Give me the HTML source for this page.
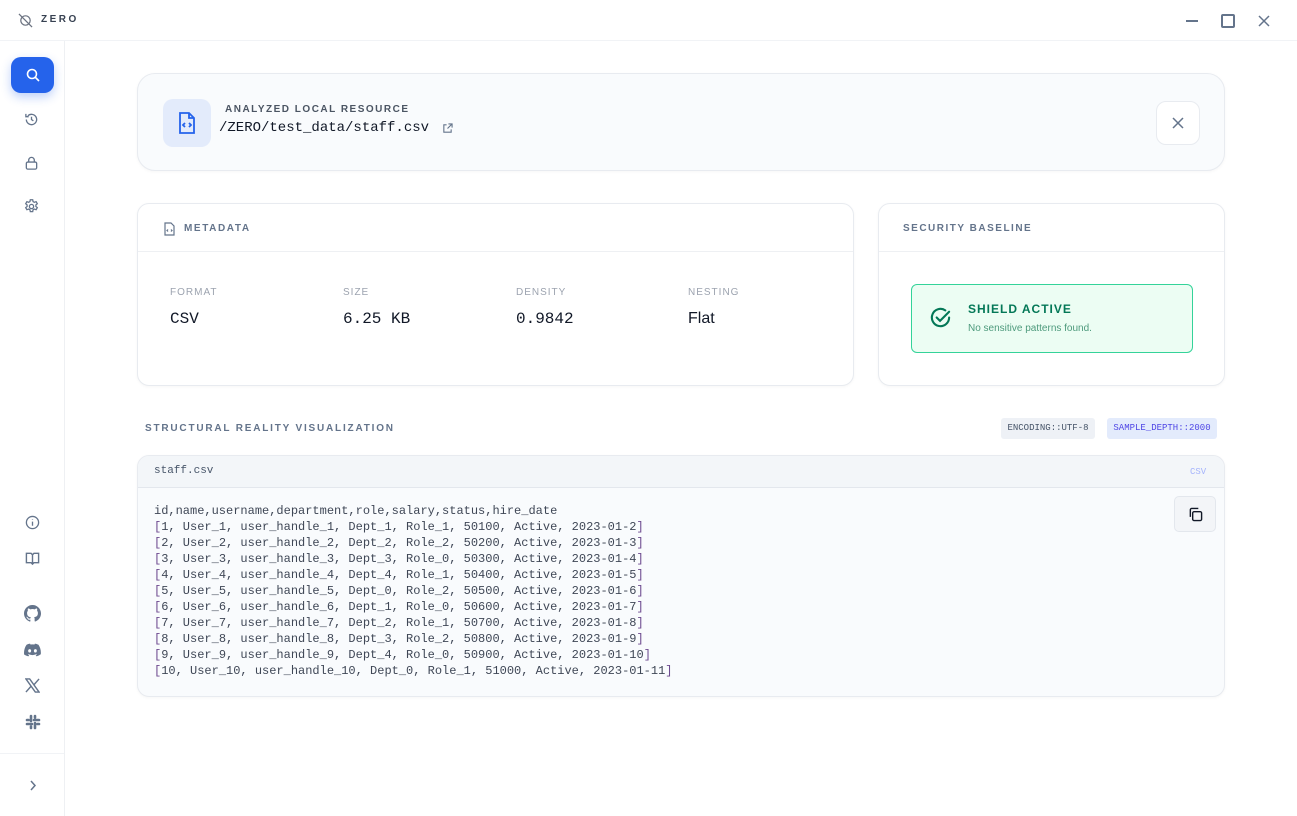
<!DOCTYPE html>
<html><head><meta charset="utf-8"><style>
*{box-sizing:border-box;margin:0;padding:0}
body{width:1297px;height:816px;background:#fff;font-family:"Liberation Sans",sans-serif;position:relative;overflow:hidden;color:#1f2937}
.mono{font-family:"Liberation Mono",monospace}
.top{position:absolute;left:0;top:0;width:1297px;height:41px;border-bottom:1px solid #f1f3f6}
.side{position:absolute;left:0;top:41px;width:65px;height:775px;border-right:1px solid #eef0f3}
.abs{position:absolute}
.card{position:absolute;background:#fff;border:1px solid #e8ebf0;border-radius:12px;box-shadow:0 1px 3px rgba(0,0,0,.04)}
.lbl{font-size:10px;letter-spacing:1.6px;font-weight:bold;color:#64748b}
.ml{font-size:10px;letter-spacing:1px;color:#9ca3af}
.mv{font-size:16px;color:#111827}
.code{font-size:12px;line-height:16px;color:#3f4756;white-space:pre}
.b{color:#6d4a8f}
svg{display:block}
</style></head><body>
<div class="top">
 <svg class="abs" style="left:18px;top:13px" width="15" height="15" viewBox="0 0 16 16" fill="none" stroke="#6b7280" stroke-width="1.3"><circle cx="8" cy="8" r="5"/><path d="M1 1L15 15"/></svg>
 <div class="abs" style="left:41px;top:14px;font-size:10px;font-weight:bold;letter-spacing:2.5px;color:#374151">ZERO</div>
 <div class="abs" style="left:1186px;top:20px;width:12px;height:1.5px;background:#64748b"></div>
 <div class="abs" style="left:1221px;top:14px;width:14px;height:14px;border:2px solid #64748b;border-radius:2px"></div>
 <svg class="abs" style="left:1258px;top:15px" width="12" height="12" viewBox="0 0 12 12" stroke="#64748b" stroke-width="1.5"><path d="M1 1L11 11M11 1L1 11"/></svg>
</div>
<div class="side">
 <div class="abs" style="left:11px;top:16px;width:43px;height:36px;background:#2563eb;border-radius:10px;box-shadow:0 4px 10px rgba(37,99,235,.3)">
  <svg style="margin:11px 0 0 15px" width="14" height="14" viewBox="0 0 14 14" fill="none" stroke="#fff" stroke-width="1.6"><circle cx="6" cy="6" r="4.5"/><path d="M9.5 9.5L13 13"/></svg></div>
 <svg class="abs" style="left:24px;top:71px" width="15" height="15" viewBox="0 0 16 16" fill="none" stroke="#64748b" stroke-width="1.4"><path d="M2.5 8a5.5 5.5 0 1 0 1.6-3.9M2 2v3h3M8 5v3l2 1.5"/></svg>
 <svg class="abs" style="left:24px;top:114px" width="15" height="16" viewBox="0 0 16 16" fill="none" stroke="#64748b" stroke-width="1.4"><rect x="2.5" y="7" width="11" height="7.5" rx="1.5"/><path d="M5 7V5a3 3 0 0 1 6 0v2"/></svg>
 <svg class="abs" style="left:23px;top:157px" width="17" height="17" viewBox="0 0 24 24" fill="none" stroke="#64748b" stroke-width="1.8"><circle cx="12" cy="12" r="3"/><path d="M10.3 2.5h3.4l.5 2.6 1.8 1 2.5-.9 1.7 2.9-2 1.7v2.1l2 1.7-1.7 2.9-2.5-.9-1.8 1-.5 2.6h-3.4l-.5-2.6-1.8-1-2.5.9-1.7-2.9 2-1.7v-2.1l-2-1.7 1.7-2.9 2.5.9 1.8-1z"/></svg>
 <svg class="abs" style="left:25px;top:474px" width="15" height="15" viewBox="0 0 16 16" fill="none" stroke="#64748b" stroke-width="1.4"><circle cx="8" cy="8" r="6.5"/><path d="M8 7v4.5M8 4.5v.5"/></svg>
 <svg class="abs" style="left:25px;top:510px" width="15" height="15" viewBox="0 0 16 16" fill="none" stroke="#64748b" stroke-width="1.5"><path d="M1.5 2.5h5l1.5 1.5 1.5-1.5h5v10h-5L8 14l-1.5-1.5h-5zM8 4v10"/></svg>
 <svg class="abs" style="left:24px;top:564px" width="17" height="17" viewBox="0 0 16 16" fill="#64748b"><path d="M8 0C3.6 0 0 3.6 0 8c0 3.5 2.3 6.5 5.5 7.6.4.1.5-.2.5-.4v-1.4c-2.2.5-2.7-1-2.7-1-.4-.9-.9-1.2-.9-1.2-.7-.5.1-.5.1-.5.8.1 1.2.8 1.2.8.7 1.300 1.9.9 2.3.7.1-.5.3-.9.5-1.1-1.8-.2-3.6-.9-3.6-4 0-.9.3-1.6.8-2.1-.1-.2-.4-1 .1-2.1 0 0 .7-.2 2.2.8.6-.2 1.3-.3 2-.3s1.4.1 2 .3c1.5-1 2.2-.8 2.2-.8.4 1.1.2 1.9.1 2.1.5.6.8 1.3.8 2.1 0 3.1-1.9 3.7-3.6 3.9.3.3.5.8.5 1.5v2.2c0 .2.1.5.6.4C13.7 14.5 16 11.5 16 8c0-4.4-3.6-8-8-8z"/></svg>
 <svg class="abs" style="left:24px;top:602px" width="17" height="14" viewBox="0 0 16 12" fill="#64748b"><path d="M13.5 1A13 13 0 0 0 10.3 0l-.4.8a12 12 0 0 0-3.800 0L5.7 0a13 13 0 0 0-3.3 1C.3 4.1-.2 7.2.1 10.2A13 13 0 0 0 4.1 12l.8-1.3-1.3-.6.3-.3a9.4 9.4 0 0 0 8.1 0l.3.3-1.3.6.8 1.3a13 13 0 0 0 4-2c.4-3.5-.6-6.6-2.3-9.2zM5.3 8.4c-.8 0-1.4-.7-1.4-1.6s.6-1.6 1.4-1.6 1.5.7 1.4 1.6c0 .9-.6 1.6-1.4 1.6zm5.4 0c-.8 0-1.4-.7-1.4-1.6s.6-1.6 1.4-1.6 1.5.7 1.4 1.6c0 .9-.6 1.6-1.4 1.6z"/></svg>
 <svg class="abs" style="left:25px;top:637px" width="15" height="15" viewBox="0 0 16 16" fill="none" stroke="#64748b" stroke-width="1.5"><path d="M1 1h4l10 14h-4zM15 1L9.2 7.6M1 15l5.8-6.6"/></svg>
 <svg class="abs" style="left:25px;top:673px" width="16" height="16" viewBox="0 0 16 16" stroke="#64748b" stroke-width="2.6" stroke-linecap="round"><path d="M6 2v5M10 9v5M2 10h5M9 6h5M2 6h1.5M12.5 10H14M10 2v1.5M6 12.5V14"/></svg>
 <div class="abs" style="left:0;top:712px;width:64px;border-top:1px solid #f1f3f6"></div>
 <svg class="abs" style="left:29px;top:739px" width="8" height="11" viewBox="0 0 8 11" fill="none" stroke="#64748b" stroke-width="1.5"><path d="M2 1l4 4.5L2 10"/></svg>
</div>

<div class="card" style="left:137px;top:73px;width:1088px;height:98px;background:#f9fbfd;border-radius:18px">
 <div class="abs" style="left:25px;top:25px;width:48px;height:48px;background:#e3ebfb;border-radius:10px">
  <svg style="margin:13px 0 0 15px" width="18" height="22" viewBox="0 0 18 22" fill="none" stroke="#2563eb" stroke-width="1.8"><path d="M2 1h9l5 5v15H2z M11 1v5h5"/><path d="M7 11l-2 2 2 2M11 11l2 2-2 2"/></svg></div>
 <div class="abs lbl" style="left:87px;top:30px;color:#4b5563;letter-spacing:1.5px">ANALYZED LOCAL RESOURCE</div>
 <div class="abs mono" style="left:81px;top:46px;font-size:14px;color:#111827">/ZERO/test_data/staff.csv</div>
 <svg class="abs" style="left:304px;top:49px" width="11" height="11" viewBox="0 0 12 12" fill="none" stroke="#64748b" stroke-width="1.2"><path d="M5 2H2v8h8V7M7 1h4v4M11 1L6 6"/></svg>
 <div class="abs" style="left:1018px;top:27px;width:44px;height:44px;background:#fff;border:1px solid #e8ebf0;border-radius:10px">
  <svg style="margin:15px 0 0 15px" width="12" height="12" viewBox="0 0 12 12" stroke="#64748b" stroke-width="1.5"><path d="M1 1L11 11M11 1L1 11"/></svg></div>
</div>

<div class="card" style="left:137px;top:203px;width:717px;height:183px">
 <svg class="abs" style="left:26px;top:18px" width="11" height="14" viewBox="0 0 11 14" fill="none" stroke="#64748b" stroke-width="1.2"><path d="M1 1h6l3 3v9H1z"/><path d="M4 7.5l-1 1 1 1M7 7.5l1 1-1 1"/></svg>
 <div class="abs lbl" style="left:46px;top:19px">METADATA</div>
 <div class="abs" style="left:0;top:47px;width:715px;border-top:1px solid #eef0f3"></div>
 <div class="abs ml" style="left:32px;top:83px">FORMAT</div><div class="abs mono mv" style="left:32px;top:106px">CSV</div>
 <div class="abs ml" style="left:205px;top:83px">SIZE</div><div class="abs mono mv" style="left:205px;top:106px">6.25 KB</div>
 <div class="abs ml" style="left:378px;top:83px">DENSITY</div><div class="abs mono mv" style="left:378px;top:106px">0.9842</div>
 <div class="abs ml" style="left:550px;top:83px">NESTING</div><div class="abs mv" style="left:550px;top:106px">Flat</div>
</div>

<div class="card" style="left:878px;top:203px;width:347px;height:183px">
 <div class="abs lbl" style="left:24px;top:19px;letter-spacing:1.5px">SECURITY BASELINE</div>
 <div class="abs" style="left:0;top:47px;width:345px;border-top:1px solid #eef0f3"></div>
 <div class="abs" style="left:32px;top:80px;width:282px;height:69px;background:#ecfdf3;border:1px solid #34d399;border-radius:6px">
  <svg class="abs" style="left:17px;top:22px" width="23" height="23" viewBox="0 0 24 24" fill="none" stroke="#047857" stroke-width="2.2" stroke-linecap="round"><path d="M21 11a9 9 0 1 1-4-7.5"/><path d="M8 11l3.5 3.5L21 5"/></svg>
  <div class="abs" style="left:56px;top:17px;font-size:12px;font-weight:bold;letter-spacing:1px;color:#047857">SHIELD ACTIVE</div>
  <div class="abs" style="left:56px;top:38px;font-size:10px;color:#4d9a7c">No sensitive patterns found.</div>
 </div>
</div>

<div class="abs lbl" style="left:145px;top:423px;letter-spacing:1.8px">STRUCTURAL REALITY VISUALIZATION</div>
<div class="abs mono" style="left:1001px;top:418px;width:94px;height:21px;background:#eef1f6;border-radius:3px;font-size:9px;color:#475569;text-align:center;line-height:21px">ENCODING::UTF-8</div>
<div class="abs mono" style="left:1107px;top:418px;width:110px;height:21px;background:#e3ebfc;border-radius:3px;font-size:9px;color:#4f46e5;text-align:center;line-height:21px">SAMPLE_DEPTH::2000</div>

<div class="card" style="left:137px;top:455px;width:1088px;height:242px;background:#f9fbfd;overflow:hidden">
 <div class="abs" style="left:0;top:0;width:1088px;height:32px;background:#f3f6f9;border-bottom:1px solid #e3e7ed"></div>
 <div class="abs mono" style="left:16px;top:9px;font-size:11px;color:#475569">staff.csv</div>
 <div class="abs mono" style="left:1052px;top:11px;font-size:9px;color:#a5b4fc">CSV</div>
 <div class="abs" style="left:1036px;top:40px;width:42px;height:36px;background:#f3f5f8;border:1px solid #e3e7ed;border-radius:5px">
  <svg style="margin:10px 0 0 13px" width="15" height="15" viewBox="0 0 16 16" fill="none" stroke="#111827" stroke-width="1.5"><rect x="5" y="5" width="9.5" height="9.5" rx="1.5"/><path d="M2.5 10.5V3a1.5 1.5 0 0 1 1.5-1.5h7"/></svg></div>
 <div class="abs mono code" style="left:16px;top:47px">id,name,username,department,role,salary,status,hire_date
<span class="b">[</span>1, User_1, user_handle_1, Dept_1, Role_1, 50100, Active, 2023-01-2<span class="b">]</span>
<span class="b">[</span>2, User_2, user_handle_2, Dept_2, Role_2, 50200, Active, 2023-01-3<span class="b">]</span>
<span class="b">[</span>3, User_3, user_handle_3, Dept_3, Role_0, 50300, Active, 2023-01-4<span class="b">]</span>
<span class="b">[</span>4, User_4, user_handle_4, Dept_4, Role_1, 50400, Active, 2023-01-5<span class="b">]</span>
<span class="b">[</span>5, User_5, user_handle_5, Dept_0, Role_2, 50500, Active, 2023-01-6<span class="b">]</span>
<span class="b">[</span>6, User_6, user_handle_6, Dept_1, Role_0, 50600, Active, 2023-01-7<span class="b">]</span>
<span class="b">[</span>7, User_7, user_handle_7, Dept_2, Role_1, 50700, Active, 2023-01-8<span class="b">]</span>
<span class="b">[</span>8, User_8, user_handle_8, Dept_3, Role_2, 50800, Active, 2023-01-9<span class="b">]</span>
<span class="b">[</span>9, User_9, user_handle_9, Dept_4, Role_0, 50900, Active, 2023-01-10<span class="b">]</span>
<span class="b">[</span>10, User_10, user_handle_10, Dept_0, Role_1, 51000, Active, 2023-01-11<span class="b">]</span></div>
</div>
</body></html>
